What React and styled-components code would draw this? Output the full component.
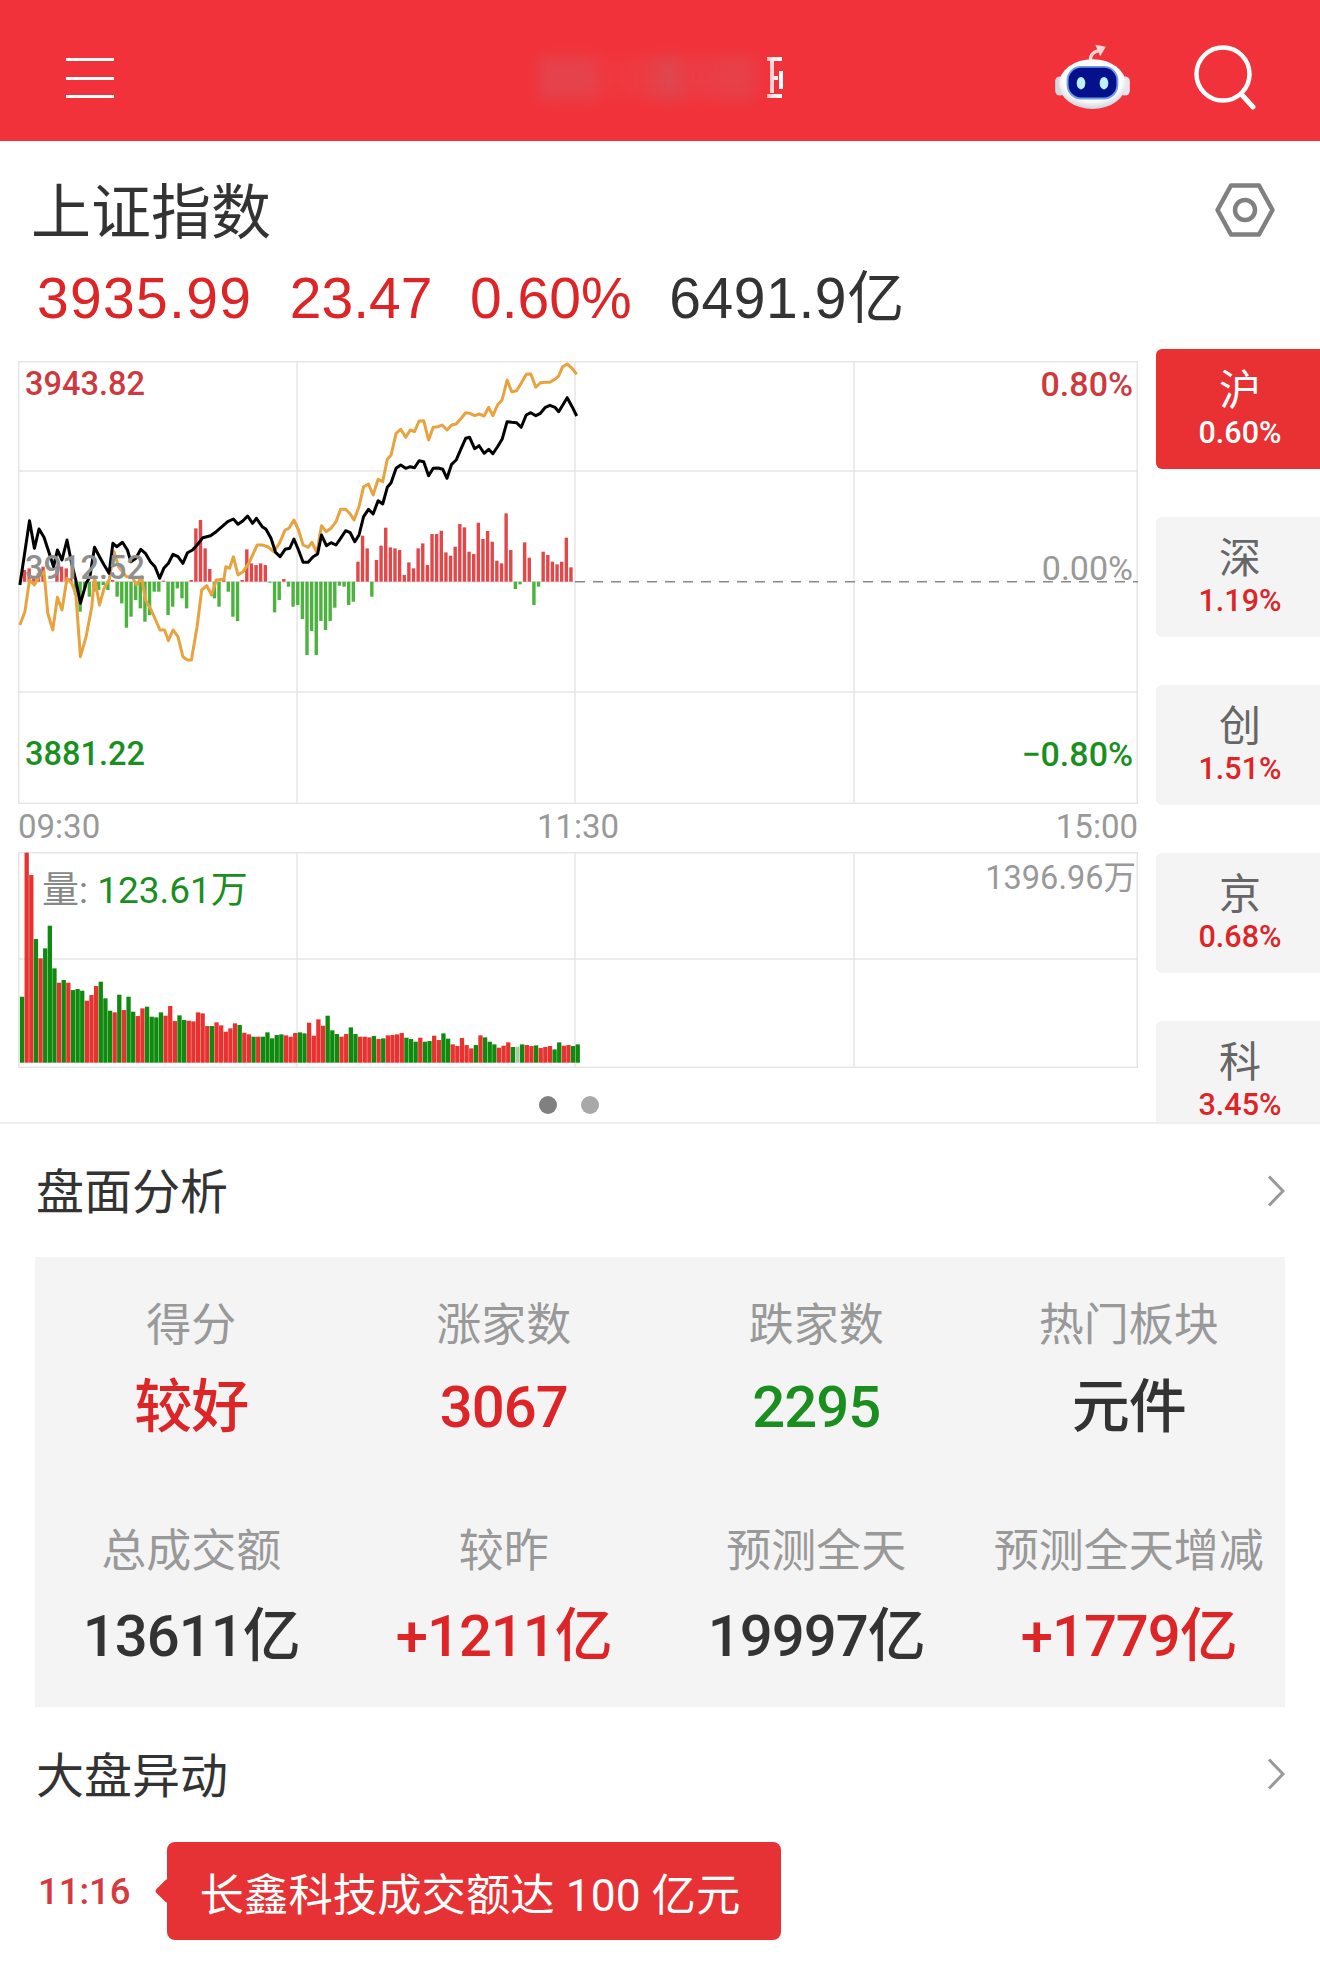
import React from 'react';
import styled, {createGlobalStyle} from 'styled-components';

const RED = '#dd2527'
const GREEN = '#1a8f1f'
const DARK = '#333333'
const GREY = '#999999'
const NUM_FONT = `Roboto, "Noto Sans CJK SC", sans-serif`
const QUOTE_FONT = `"Liberation Sans", "Noto Sans CJK SC", sans-serif`

const GlobalStyle = createGlobalStyle`
  html, body {
    margin: 0;
    padding: 0;
    background: #fff;
  }
  * {
    box-sizing: border-box;
  }
`

const Page = styled.div`
  width: 1320px;
  height: 1966px;
  overflow: hidden;
  background: #fff;
  font-family: ${NUM_FONT};
  color: ${DARK};
`

const TopBar = styled.header`
  height: 141px;
  background: #f2323a;
  display: flex;
  align-items: center;
  justify-content: space-between;
  padding: 0 64px 0 66px;
`
const MenuButton = styled.div`
  width: 48px;
  display: flex;
  flex-direction: column;
  gap: 15.5px;
  margin-top: 15px;
`
const MenuLine = styled.span`
  display: block;
  height: 3px;
  background: #fff;
`
const LogoSlot = styled.div`
  display: flex;
  align-items: center;
  margin: 14px 0 0 152px;
`
const BlurredLogo = styled.div`
  width: 228px;
  height: 44px;
  filter: blur(7px);
  background: linear-gradient(90deg, #e5434c 0 22%, #f0363d 30%, #ee3a42 45%, #dd4850 58%, #ee3a42 66%, #e5424b 90%, #f2323a 100%);
`
const ActionIcons = styled.div`
  display: flex;
  align-items: center;
  gap: 64px;
  margin-top: 15px;
`
const RobotSlot = styled.div`
  display: flex;
  margin-bottom: 6px;
`

const TitleRow = styled.div`
  display: flex;
  align-items: center;
  justify-content: space-between;
  padding: 37px 45px 11px 31px;
`
const Title = styled.h1`
  margin: 0;
  font-size: 60px;
  line-height: 60px;
  font-weight: 400;
  color: ${DARK};
  font-family: "Noto Sans CJK SC", sans-serif;
`
const SettingsSlot = styled.div`
  display: flex;
  margin-top: 4px;
`
const QuoteRow = styled.div`
  height: 98px;
  display: flex;
  align-items: center;
  gap: 37.6px;
  padding-left: 37px;
  font-family: ${QUOTE_FONT};
  font-size: 57px;
`
const QuoteValue = styled.span`
  color: ${p => p.$color};
  line-height: 60px;
  letter-spacing: ${p => p.$tracking || 0}px;
`
const LabelValue = styled.span`
  color: ${p => p.$color};
`

const Body = styled.div`
  display: flex;
  height: 775px;
  margin-top: 2px;
  border-bottom: 2px solid #eeeeee;
`
const ChartColumn = styled.div`
  width: 1156px;
  padding: 12px 18px 0;
`
const ChartBox = styled.div`
  position: relative;
  width: 1120px;
  height: ${p => p.$height}px;
`
const ChartLabel = styled.span`
  position: absolute;
  font-size: ${p => p.$size || 32.5}px;
  font-weight: ${p => p.$weight || 400};
  line-height: 40px;
  white-space: nowrap;
  color: ${p => p.$color};
  top: ${p => p.$top}px;
  ${p => p.$right !== undefined ? `right: ${p.$right}px;` : `left: ${p.$left}px;`}
`
const AxisRow = styled.div`
  height: 48px;
  display: flex;
  align-items: center;
  justify-content: space-between;
  font-size: 33px;
  color: ${GREY};
  padding: 0 0 4px 0;
`
const Dots = styled.div`
  display: flex;
  justify-content: center;
  gap: 24px;
  margin: 28px 0 0 -18px;
`
const Dot = styled.span`
  width: 18px;
  height: 18px;
  border-radius: 50%;
  background: ${p => p.$color};
`

const TabColumn = styled.div`
  width: 164px;
  overflow: hidden;
  display: flex;
  flex-direction: column;
  gap: 48px;
`
const Tab = styled.div`
  flex: 0 0 120px;
  border-radius: 6px 0 0 6px;
  background: ${p => p.$active ? '#e93032' : '#f4f4f4'};
  color: ${p => p.$active ? '#fff' : '#666'};
  display: flex;
  flex-direction: column;
  align-items: center;
  padding: 9px 0 0 4px;
`
const TabName = styled.span`
  font-family: "Noto Sans CJK SC", sans-serif;
  font-size: 42px;
  line-height: 57px;
`
const TabValue = styled.span`
  font-size: 30.5px;
  line-height: 36px;
  font-weight: 500;
  color: ${p => p.$active ? '#fff' : RED};
`

const SectionHead = styled.div`
  height: ${p => p.$height}px;
  display: flex;
  align-items: center;
  justify-content: space-between;
  padding: 0 35px 0 36px;
`
const SectionTitle = styled.h2`
  margin: 0 0 5px;
  font-family: "Noto Sans CJK SC", sans-serif;
  font-size: 48px;
  font-weight: 400;
  color: ${DARK};
`

const StatsPanel = styled.div`
  width: 1250px;
  height: 450px;
  margin-left: 35px;
  background: #f4f4f5;
  display: grid;
  grid-template-columns: repeat(4, 1fr);
  grid-template-rows: 226px 224px;
  padding-top: 32.5px;
`
const StatCell = styled.div`
  display: flex;
  flex-direction: column;
  align-items: center;
`
const StatLabel = styled.span`
  font-family: "Noto Sans CJK SC", sans-serif;
  font-size: 45px;
  line-height: 64px;
  color: ${GREY};
`
const StatValue = styled.span`
  margin-top: ${p => p.$gap}px;
  font-size: 58px;
  line-height: 64px;
  letter-spacing: -1px;
  font-weight: 500;
  color: ${p => p.$color};
`

const EventRow = styled.div`
  display: flex;
  align-items: center;
  gap: 36px;
  padding-left: 38px;
  margin-top: 1px;
`
const EventTime = styled.span`
  font-size: 36.5px;
  font-weight: 500;
  color: #d63a40;
`
const EventBubble = styled.div`
  position: relative;
  width: 614px;
  height: 98px;
  border-radius: 8px;
  background: #e63234;
  color: #fff;
  font-size: 44.4px;
  display: flex;
  align-items: center;
  padding-left: 33px;
  white-space: nowrap;

  &::before {
    content: "";
    position: absolute;
    left: -11px;
    top: 38px;
    width: 22px;
    height: 22px;
    background: #e63234;
    transform: rotate(45deg) scale(0.8, 0.8);
    border-radius: 3px;
  }
`

const BLACK_LINE = [[52,705],[77,512],[90,595],[102,537],[115,562],[130,615],[140,650],[150,600],[162,630],[175,570],[187,640],[198,690],[210,760],[225,700],[235,680],[247,592],[260,620],[272,645],[285,670],[295,580],[305,590],[320,577],[333,600],[342,635],[355,625],[368,598],[380,610],[393,635],[405,650],[417,685],[428,655],[440,640],[452,613],[465,620],[478,640],[490,608],[503,600],[515,585],[530,563],[550,557],[565,545],[580,530],[595,515],[610,507],[622,523],[635,512],[647,498],[660,520],[670,505],[685,530],[695,538],[708,565],[720,607],[732,620],[745,598],[757,595],[768,567],[780,600],[792,637],[805,637],[818,620],[830,612],[840,555],[853,587],[865,578],[878,585],[890,565],[903,542],[915,548],[927,575],[938,555],[950,500],[963,478],[975,492],[988,452],[1000,462],[1012,412],[1022,398],[1035,355],[1047,345],[1060,355],[1072,350],[1083,353],[1095,332],[1107,335],[1120,377],[1132,355],[1145,354],[1157,358],[1168,385],[1180,343],[1192,330],[1205,295],[1217,265],[1227,262],[1240,296],[1252,287],[1265,310],[1277,298],[1288,311],[1300,290],[1312,268],[1325,215],[1337,217],[1350,218],[1362,232],[1375,195],[1387,188],[1400,197],[1412,190],[1425,172],[1437,166],[1450,172],[1460,185],[1482,143],[1495,170],[1507,198]]
const ORANGE_LINE = [[52,825],[65,785],[77,690],[90,705],[102,680],[115,665],[125,790],[138,840],[150,742],[162,780],[175,685],[187,700],[198,730],[210,920],[225,860],[240,770],[247,680],[260,765],[272,715],[285,690],[298,605],[310,650],[330,680],[345,680],[357,705],[370,680],[380,750],[395,780],[418,840],[430,840],[440,872],[452,840],[465,860],[478,920],[490,930],[500,930],[515,830],[527,720],[540,707],[553,735],[565,690],[585,688],[590,650],[600,655],[610,620],[622,675],[635,665],[650,640],[672,585],[685,585],[700,590],[715,605],[730,580],[745,540],[755,535],[768,510],[780,540],[792,585],[805,592],[815,577],[828,608],[840,527],[852,545],[865,535],[878,515],[890,478],[903,478],[915,492],[925,510],[938,470],[950,410],[963,402],[975,435],[988,388],[1000,395],[1012,328],[1022,315],[1035,250],[1047,238],[1060,262],[1072,240],[1083,245],[1095,213],[1107,212],[1120,270],[1132,232],[1145,230],[1155,225],[1168,240],[1180,225],[1192,222],[1205,205],[1217,188],[1228,190],[1240,197],[1252,192],[1265,198],[1277,172],[1288,197],[1300,165],[1312,150],[1325,90],[1337,125],[1350,122],[1362,100],[1375,73],[1387,72],[1400,112],[1412,98],[1425,97],[1437,97],[1450,88],[1460,78],[1470,50],[1482,42],[1495,55],[1507,73]]
const FLOW_BARS = [0,35,40,10,25,45,0,0,35,45,40,10,-40,-90,-20,-45,-30,-25,-10,-25,5,-45,-65,-138,-105,-55,-80,-120,-100,-30,-30,3,-100,-75,-20,-50,-80,5,160,185,100,38,-50,-75,10,-30,-105,-118,5,97,55,50,55,50,-3,-92,-55,8,-15,-75,-70,-112,-220,-148,-220,-118,-145,-118,-78,-12,-15,-70,-60,60,138,100,-45,65,108,162,103,100,95,20,58,40,100,115,50,143,143,153,88,78,105,173,163,90,83,177,128,152,120,63,55,205,95,-22,-8,118,72,-70,-15,90,80,60,52,60,132,43]
// r = red, g = green; height in the same units as the crop I measured
const VOLUME_BARS = 'g198 r630 r563 g371 r313 g343 g411 g283 r240 g248 r240 g218 g221 g216 r186 r203 r230 g243 g193 g156 r151 g204 r158 g198 g153 r140 r163 g168 g138 g136 g151 r141 r170 r125 g142 g128 r126 r124 r151 r148 r110 g110 r121 r112 r93 r103 r118 g113 r90 r85 g78 r78 g78 g91 g73 g83 g85 r82 r78 r89 g91 g88 r120 r81 r130 r111 g141 g97 g86 r78 r86 g106 g86 r78 r78 r76 g80 r71 g73 r82 r83 r85 r89 g75 g71 g63 r75 g63 g65 r81 r68 g88 g72 r55 r50 r74 r53 r43 g53 r82 g76 g63 g55 r45 r51 r61 g47 x48 g55 r53 r50 g52 r44 r47 r50 g40 g61 r51 r53 g50 g55'.split(' ')
const VOLUME_COLORS = {r: '#e8322f', g: '#0f8a0f', x: '#a9c9a9'}
const BAR_STEP = 12.1

const localX = zx => zx / 2.613 - 18
const toPoints = line => line.map(([x, y]) => `${localX(x).toFixed(1)},${(y / 3 - 11).toFixed(1)}`).join(' ')

const GRID = '#e6e6e6'

const Grid = ({height, rows}) => (
    <>
        <rect x="0.75" y="0.75" width="1118.5" height={height - 1.5} fill="none" stroke={GRID} strokeWidth="1.5"/>
        {[279, 557, 836].map(x => <line key={x} x1={x} x2={x} y1="0" y2={height} stroke={GRID} strokeWidth="1.5"/>)}
        {rows.map(y => <line key={y} x1="0" x2="1120" y1={y} y2={y} stroke={GRID} strokeWidth="1.5"/>)}
    </>
)

const PriceChart = () => {
    const baseline = 220.7
    return (
        <svg width="1120" height="443" style={{display: 'block'}}>
            <Grid height={443} rows={[110, 331]}/>
            <line x1="0" x2="557" y1={baseline} y2={baseline} stroke={GRID} strokeWidth="1.5"/>
            <line x1="557" x2="1120" y1={baseline} y2={baseline} stroke="#888" strokeWidth="1.5" strokeDasharray="10 8"/>
            {FLOW_BARS.map((v, i) => {
                const h = Math.abs(v) / 3
                return <rect key={i} x={localX(52 + BAR_STEP * i) - 1.7} width="3.4" height={h}
                             y={v > 0 ? baseline - h : baseline} fill={v > 0 ? '#e2484a' : '#4cb33f'}/>
            })}
            <polyline points={toPoints(ORANGE_LINE)} fill="none" stroke="#e8a23e" strokeWidth="3" strokeLinejoin="round"/>
            <polyline points={toPoints(BLACK_LINE)} fill="none" stroke="#000" strokeWidth="3" strokeLinejoin="round"/>
        </svg>
    )
}

const VolumeChart = () => {
    const baseline = 210.7
    return (
        <svg width="1120" height="216" style={{display: 'block'}}>
            <Grid height={216} rows={[107]}/>
            {VOLUME_BARS.map((bar, i) => {
                const h = Number(bar.slice(1)) / 3
                return <rect key={i} x={localX(52 + BAR_STEP * i)} width="4.3" height={h} y={baseline - h} fill={VOLUME_COLORS[bar[0]]}/>
            })}
        </svg>
    )
}

const LogoFragment = () => (
    <svg width="17" height="42" viewBox="0 0 17 42" style={{marginLeft: -1}}>
        <path d="M1 2h15M6 4v32M15 14v18M1 39h15M8 21h4" stroke="#fff" strokeWidth="4" fill="none"/>
    </svg>
)

const RobotIcon = () => (
    <svg width="75" height="67" viewBox="0 0 78 70">
        <defs>
            <radialGradient id="robotShell" cx="50%" cy="40%" r="62%">
                <stop offset="0.7" stopColor="#ffffff"/>
                <stop offset="1" stopColor="#c9ccd6"/>
            </radialGradient>
        </defs>
        <path d="M37 22c-1-7 1-11 8-13" stroke="#f6d6d6" strokeWidth="3.5" fill="none"/>
        <path d="M42 3l11 2-6 10z" fill="#f6d6d6"/>
        <rect x="0" y="36" width="10" height="20" rx="5" fill="#d4d6de"/>
        <rect x="68" y="36" width="10" height="20" rx="5" fill="#e6e7ec"/>
        <ellipse cx="39" cy="44" rx="35" ry="26" fill="url(#robotShell)"/>
        <rect x="13" y="26" width="52" height="33" rx="14" fill="#04108c" stroke="#6f9be8" strokeWidth="2"/>
        <ellipse cx="27" cy="43" rx="4.5" ry="6.5" fill="#bfeeff"/>
        <ellipse cx="51" cy="43" rx="4.5" ry="6.5" fill="#bfeeff"/>
    </svg>
)

const SearchIcon = () => (
    <svg width="62" height="66" viewBox="0 0 62 66">
        <circle cx="29" cy="29" r="26.5" fill="none" stroke="#fff" strokeWidth="4.5"/>
        <path d="M48 50l11 12" stroke="#fff" strokeWidth="5" strokeLinecap="round"/>
    </svg>
)

const SettingsIcon = () => (
    <svg width="60" height="54" viewBox="0 0 60 54">
        <path d="M16 2.5h28L57.5 27 44 51.5H16L2.5 27z" fill="none" stroke="#808080" strokeWidth="4.5" strokeLinejoin="round"/>
        <circle cx="30" cy="27" r="10" fill="none" stroke="#808080" strokeWidth="4.5"/>
    </svg>
)

const Chevron = () => (
    <svg width="18" height="32" viewBox="0 0 18 32">
        <path d="M2 1.5L16 16 2 30.5" fill="none" stroke="#999" strokeWidth="3"/>
    </svg>
)

const TABS = [
    {name: '沪', value: '0.60%', active: true},
    {name: '深', value: '1.19%'},
    {name: '创', value: '1.51%'},
    {name: '京', value: '0.68%'},
    {name: '科', value: '3.45%'},
]

const STATS = [
    {label: '得分', value: '较好', color: RED, gap: 21.5},
    {label: '涨家数', value: '3067', color: RED, gap: 21.5},
    {label: '跌家数', value: '2295', color: GREEN, gap: 21.5},
    {label: '热门板块', value: '元件', color: DARK, gap: 21.5},
    {label: '总成交额', value: '13611亿', color: DARK, gap: 24},
    {label: '较昨', value: '+1211亿', color: RED, gap: 24},
    {label: '预测全天', value: '19997亿', color: DARK, gap: 24},
    {label: '预测全天增减', value: '+1779亿', color: RED, gap: 24},
]

const App = () => (
    <Page>
        <GlobalStyle/>
        <TopBar>
            <MenuButton>
                <MenuLine/>
                <MenuLine/>
                <MenuLine/>
            </MenuButton>
            <LogoSlot>
                <BlurredLogo/>
                <LogoFragment/>
            </LogoSlot>
            <ActionIcons>
                <RobotSlot><RobotIcon/></RobotSlot>
                <SearchIcon/>
            </ActionIcons>
        </TopBar>

        <TitleRow>
            <Title>上证指数</Title>
            <SettingsSlot><SettingsIcon/></SettingsSlot>
        </TitleRow>
        <QuoteRow>
            <QuoteValue $color={RED} $tracking={1.3}>3935.99</QuoteValue>
            <QuoteValue $color={RED}>23.47</QuoteValue>
            <QuoteValue $color={RED}>0.60%</QuoteValue>
            <QuoteValue $color={DARK} $tracking={0.6}>6491.9亿</QuoteValue>
        </QuoteRow>

        <Body>
            <ChartColumn>
                <ChartBox $height={443}>
                    <PriceChart/>
                    <ChartLabel $top={3} $left={7} $weight={500} $color="#cc3a40">3943.82</ChartLabel>
                    <ChartLabel $top={3} $right={5} $size={34} $weight={500} $color="#cc3a40">0.80%</ChartLabel>
                    <ChartLabel $top={187} $left={7} $weight={500} $color="#8f8f8f">3912.52</ChartLabel>
                    <ChartLabel $top={187} $right={5} $size={34} $color="#999">0.00%</ChartLabel>
                    <ChartLabel $top={373} $left={7} $weight={500} $color={GREEN}>3881.22</ChartLabel>
                    <ChartLabel $top={373} $right={5} $size={34} $weight={500} $color={GREEN}>−0.80%</ChartLabel>
                </ChartBox>
                <AxisRow>
                    <span>09:30</span>
                    <span>11:30</span>
                    <span>15:00</span>
                </AxisRow>
                <ChartBox $height={216}>
                    <VolumeChart/>
                    <ChartLabel $top={19} $left={24} $size={37} $color="#888">量: <LabelValue $color={GREEN}>123.61万</LabelValue></ChartLabel>
                    <ChartLabel $top={6} $right={2} $color="#999">1396.96万</ChartLabel>
                </ChartBox>
                <Dots>
                    <Dot $color="#808080"/>
                    <Dot $color="#a8a8a8"/>
                </Dots>
            </ChartColumn>
            <TabColumn>
                {TABS.map(tab => (
                    <Tab key={tab.name} $active={tab.active}>
                        <TabName>{tab.name}</TabName>
                        <TabValue $active={tab.active}>{tab.value}</TabValue>
                    </Tab>
                ))}
            </TabColumn>
        </Body>

        <SectionHead $height={133}>
            <SectionTitle>盘面分析</SectionTitle>
            <Chevron/>
        </SectionHead>
        <StatsPanel>
            {STATS.map(stat => (
                <StatCell key={stat.label}>
                    <StatLabel>{stat.label}</StatLabel>
                    <StatValue $color={stat.color} $gap={stat.gap}>{stat.value}</StatValue>
                </StatCell>
            ))}
        </StatsPanel>
        <SectionHead $height={134}>
            <SectionTitle>大盘异动</SectionTitle>
            <Chevron/>
        </SectionHead>
        <EventRow>
            <EventTime>11:16</EventTime>
            <EventBubble>长鑫科技成交额达 100 亿元</EventBubble>
        </EventRow>
    </Page>
)

export default App
